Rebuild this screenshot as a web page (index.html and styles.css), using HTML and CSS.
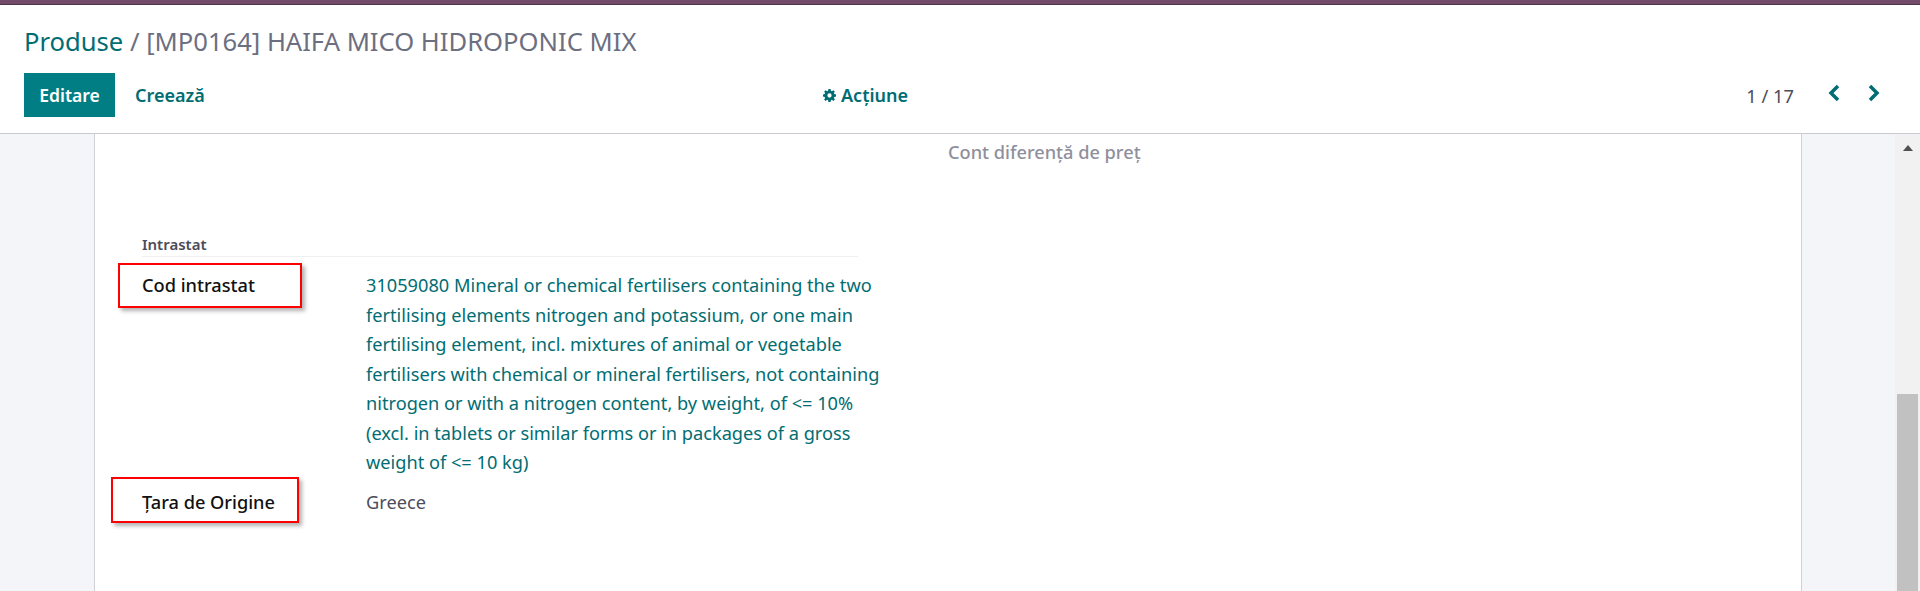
FILE: index.html
```html
<!DOCTYPE html>
<html lang="ro">
<head>
<meta charset="utf-8">
<title>Produse</title>
<link rel="stylesheet" href="styles.css">
</head>
<body>
<div class="topbar"></div>
<header class="cp">
  <div class="breadcrumb"><a class="crumb-link">Produse</a><span class="crumb-sep"> / </span><span class="crumb-cur">[MP0164] HAIFA MICO HIDROPONIC MIX</span></div>
  <div class="cp-row">
    <div class="cp-left">
      <button class="btn-primary">Editare</button>
      <button class="btn-link">Creează</button>
    </div>
    <div class="cp-mid">
      <svg class="gear" viewBox="0 0 14 14" aria-hidden="true"><path fill-rule="evenodd" d="M5.800 0h2.400l.3 1.900 1.100.5L11.200 1.300l1.600 1.600-1.100 1.500.5 1.100 1.800.3v2.400l-1.800.3-.5 1.100 1.100 1.600-1.600 1.600-1.600-1.100-1.100.5-.3 1.800H5.800l-.3-1.800-1.100-.5-1.600 1.100-1.600-1.600 1.100-1.600-.5-1.100L0 8.200V5.800l1.800-.3.500-1.100-1.100-1.500 1.600-1.600 1.600 1.100 1.100-.5zM7 4.700a2.300 2.300 0 1 0 0 4.600 2.300 2.300 0 0 0 0-4.600z"/></svg>
      <span>Acțiune</span>
    </div>
    <div class="cp-right">
      <span class="pager">1 / 17</span>
      <svg class="chev" viewBox="0 0 12 18" aria-hidden="true"><path d="M10 2 3 9l7 7"/></svg>
      <svg class="chev" viewBox="0 0 12 18" aria-hidden="true"><path d="M2 2l7 7-7 7"/></svg>
    </div>
  </div>
</header>
<div class="body-row">
  <main class="content">
    <section class="sheet">
      <div class="muted-line"><span>Cont diferență de preț</span></div>
      <div class="group">
        <div class="group-title">Intrastat</div>
        <div class="field field-code">
          <div class="label">Cod intrastat</div>
          <div class="value link">31059080 Mineral or chemical fertilisers containing the two fertilising elements nitrogen and potassium, or one main fertilising element, incl. mixtures of animal or vegetable fertilisers with chemical or mineral fertilisers, not containing nitrogen or with a nitrogen content, by weight, of &lt;= 10% (excl. in tablets or similar forms or in packages of a gross weight of &lt;= 10 kg)</div>
        </div>
        <div class="field field-origin">
          <div class="label">Țara de Origine</div>
          <div class="value">Greece</div>
        </div>
      </div>
      <div class="mark mark-a"></div>
      <div class="mark mark-b"></div>
    </section>
  </main>
  <aside class="scrollbar">
    <div class="arrow"></div>
    <div class="thumb"></div>
  </aside>
</div>
</body>
</html>
```
FILE: styles.css
```css
* { box-sizing: border-box; }
html, body { margin: 0; height: 100%; }
body {
  height: 591px;
  overflow: hidden;
  background: #fff;
  font-family: "Noto Sans", "Open Sans", sans-serif;
  font-size: 18.200px;
  color: #4c4c5a;
  display: flex;
  flex-direction: column;
}
.topbar {
  height: 5px;
  background: #714b67;
  border-bottom: 1px solid #4f3449;
}
.cp {
  height: 129px;
  padding: 20px 40px 0 24px;
  background: #fff;
  border-bottom: 1px solid #c9c9d1;
  flex: none;
}
.breadcrumb {
  font-size: 25.600px;
  line-height: 34px;
  color: #6c6f7f;
  height: 34px;
}
.crumb-link { color: #016d72; }
.cp-row {
  display: grid;
  grid-template-columns: 799px auto 1fr;
  align-items: center;
  margin-top: 14px;
  height: 44px;
}
.cp-left { display: flex; align-items: center; }
.btn-primary {
  width: 91px;
  height: 44px;
  border: 0;
  padding: 0;
  background: #017e84;
  color: #fff;
  font: 600 17.500px "Noto Sans", sans-serif;
}
.btn-link {
  border: 0;
  background: none;
  padding: 0;
  margin-left: 20px;
  color: #016d72;
  font: 600 18px "Noto Sans", sans-serif;
}
.cp-mid {
  display: flex;
  align-items: center;
  gap: 5px;
  color: #016d72;
  font-weight: 600;
  font-size: 18px;
}
.gear { width: 13px; height: 13px; fill: #016d72; }
.cp-right {
  display: flex;
  align-items: center;
  justify-content: flex-end;
}
.pager { font-size: 18.300px; color: #4c4c5a; margin-right: 34px; }
.chev {
  width: 12px;
  height: 18px;
  fill: none;
  stroke: #016d72;
  stroke-width: 3.500;
  margin-top: -4px;
}
.chev + .chev { margin-left: 28px; }
.body-row {
  flex: 1;
  display: flex;
  min-height: 0;
}
.content {
  flex: 1;
  background: #f4f5f9;
  padding: 0 93px 0 94px;
  overflow: hidden;
}
.sheet {
  position: relative;
  height: 100%;
  background: #fff;
  border-left: 1px solid #cfd0d8;
  border-right: 1px solid #cfd0d8;
  padding-left: 47px;
}
.muted-line {
  height: 95px;
  padding: 7px 0 0 806px;
  color: #8f8f9c;
  font-weight: 500;
  line-height: 23px;
}
.group { width: 750px; }
.group-title {
  width: 716px;
  height: 28px;
  padding-top: 3px;
  font-size: 15px;
  font-weight: 600;
  line-height: 24px;
  color: #4c4c5a;
  border-bottom: 1px solid #f0f0f3;
}
.field {
  display: grid;
  grid-template-columns: 224px 1fr;
}
.field-code { margin-top: 14px; }
.field-origin { margin-top: 10px; }
.label {
  color: #111;
  font-weight: 500;
  line-height: 29.500px;
}
.value { line-height: 29.500px; }
.link { color: #016d72; }
.mark {
  position: absolute;
  border: 2px solid #f00;
  box-shadow: 3px 3px 4px rgba(0, 0, 0, 0.3);
  pointer-events: none;
}
.mark-a { left: 23px; top: 129px; width: 184px; height: 45px; }
.mark-b { left: 16px; top: 343px; width: 188px; height: 46px; }
.scrollbar {
  width: 25px;
  flex: none;
  background: #f1f1f1;
  position: relative;
}
.arrow {
  width: 0;
  height: 0;
  margin: 11px auto 0;
  border-left: 5.500px solid transparent;
  border-right: 5.500px solid transparent;
  border-bottom: 6px solid #505050;
}
.thumb {
  position: absolute;
  left: 2px;
  right: 2px;
  top: 260px;
  bottom: 0;
  background: #c1c1c1;
}
```
